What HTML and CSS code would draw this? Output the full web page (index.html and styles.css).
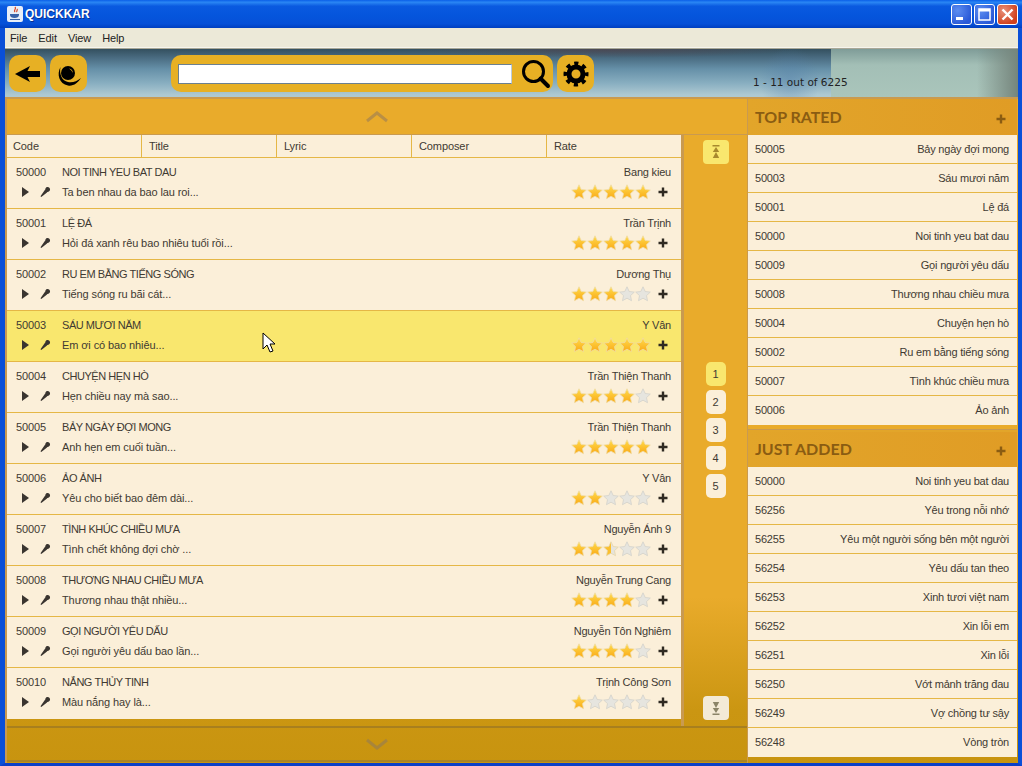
FILE: index.html
```html
<!DOCTYPE html>
<html lang="vi">
<head>
<meta charset="utf-8">
<title>QUICKKAR</title>
<link rel="stylesheet" href="styles.css">
</head>
<body>
<svg class="defs" width="0" height="0" aria-hidden="true">
  <defs>
    <linearGradient id="gold" x1="0" y1="0" x2="0" y2="1"><stop offset="0" stop-color="#ffdc4e"/><stop offset="1" stop-color="#f9a916"/></linearGradient>
    <linearGradient id="half" x1="0" y1="0" x2="1" y2="0"><stop offset=".5" stop-color="#fbbf2c"/><stop offset=".5" stop-color="#e6e4dc"/></linearGradient>
    <symbol id="on" viewBox="0 0 16 16"><path d="M8 .8l2.200 4.700 5.100.6-3.800 3.500 1 5.100L8 12.200l-4.500 2.500 1-5.100L.7 6.100l5.100-.6z" fill="url(#gold)" stroke="#f0dca6" stroke-width=".8"/></symbol>
    <symbol id="off" viewBox="0 0 16 16"><path d="M8 .8l2.200 4.700 5.100.6-3.800 3.500 1 5.100L8 12.200l-4.500 2.500 1-5.100L.7 6.100l5.100-.6z" fill="#e6e5df" stroke="#d3d2ca" stroke-width=".8"/></symbol>
    <symbol id="mid" viewBox="0 0 16 16"><path d="M8 .8l2.200 4.700 5.100.6-3.800 3.500 1 5.100L8 12.200l-4.500 2.500 1-5.100L.7 6.100l5.100-.6z" fill="url(#half)" stroke="#e6d6a8" stroke-width=".8"/></symbol>
    <symbol id="play" viewBox="0 0 10 12"><path d="M1 1l7 5-7 5z" fill="#3a3530"/></symbol>
    <symbol id="mic" viewBox="0 0 12 12"><path d="M6.600 2.200a2.400 2.400 0 1 1 3.300 3.300 2.400 2.400 0 0 1-3.300-3.300zM6 3.800l2.300 2.400-4.400 3.600-1.700 1.200-.7-.7 1.200-1.700z" fill="#3a3530"/></symbol>
    <symbol id="plus" viewBox="0 0 10 10"><path d="M3.800.5h2.400v3.300h3.300v2.400H6.200v3.300H3.800V6.200H.5V3.800h3.300z" fill="currentColor"/></symbol>
    <symbol id="jump" viewBox="0 0 8 14"><path d="M.5 0h7v1.400h-7zM4 2l3.200 5H.8zM4 7l3.200 6H.8z" fill="currentColor"/></symbol>
  </defs>
</svg>
<div class="window">
  <header class="titlebar">
    <svg class="app-icon" width="16" height="16" viewBox="0 0 16 16"><rect width="16" height="16" rx="2" fill="#e8eef8"/><path d="M8 1c2 2-2 3 0 5M10 3c1 1-1 2 0 3" stroke="#d8401c" stroke-width="1.200" fill="none"/><path d="M3 8h9v1c0 2-2 3-4.500 3S3 11 3 9z" fill="#3a62a8"/><path d="M3 13h10v1H3z" fill="#3a62a8"/></svg>
    <span class="app-title">QUICKKAR</span>
    <div class="win-btns">
      <span class="win-btn"><svg width="21" height="21" viewBox="0 0 21 21"><rect x="5" y="13" width="7" height="3" fill="#fff"/></svg></span>
      <span class="win-btn"><svg width="21" height="21" viewBox="0 0 21 21"><rect x="5" y="5" width="11" height="11" fill="none" stroke="#fff" stroke-width="1.500"/><rect x="5" y="5" width="11" height="2.500" fill="#fff"/></svg></span>
      <span class="win-btn win-close"><svg width="21" height="21" viewBox="0 0 21 21"><path d="M5.500 5.500l10 10M15.500 5.500l-10 10" stroke="#fff" stroke-width="2.400"/></svg></span>
    </div>
  </header>
  <div class="frame">
    <nav class="menubar"><span>File</span><span>Edit</span><span>View</span><span>Help</span></nav>
    <div class="toolbar">
      <button class="tool"><svg width="25" height="16" viewBox="0 0 25 16"><path d="M0 8L15 0l-2.500 5H25v6H12.500L15 16z" fill="#000"/></svg></button>
      <button class="tool"><svg width="28" height="26" viewBox="0 0 28 26"><path d="M5.500 6C1.500 13 4 23 13 24.500 18 25.500 23 22 26 17c-4 3.500-9 5-13 4C7 20 4 13 5.500 6z" fill="#000"/><circle cx="13" cy="12" r="7" fill="#000"/><path d="M14 7.500c2.500.2 4 2 3.700 4.500-.5-1.800-1.800-3.200-3.700-4.500z" fill="#e7b024"/></svg></button>
      <div class="search">
        <input class="search-input" type="text">
        <svg width="30" height="30" viewBox="0 0 30 30"><circle cx="12.500" cy="12.500" r="10" fill="none" stroke="#000" stroke-width="3"/><path d="M19.500 19.500l7.500 7.500" stroke="#000" stroke-width="4" stroke-linecap="round"/></svg>
      </div>
      <button class="tool"><svg width="26" height="26" viewBox="0 0 26 26"><circle cx="13" cy="13" r="7" fill="none" stroke="#000" stroke-width="5"/><circle cx="13" cy="13" r="10.500" fill="none" stroke="#000" stroke-width="4" stroke-dasharray="4.120 4.120" stroke-dashoffset="2.060"/></svg></button>
      <span class="count">1 - 11 out of 6225</span>
    </div>
    <main class="main">
      <section class="left">
        <div class="scroll-bar"><svg width="24" height="12" viewBox="0 0 24 12"><path d="M2 10l10-8 10 8" fill="none" stroke="#b98f45" stroke-width="3"/></svg></div>
        <div class="middle">
          <div class="list">
            <div class="list-head"><span>Code</span><span>Title</span><span>Lyric</span><span>Composer</span><span>Rate</span></div>

            <article class="song">
              <div class="line"><span class="code">50000</span><span class="title title-caps">NOI TINH YEU BAT DAU</span><span class="composer">Bang kieu</span></div>
              <div class="line"><span class="ctl"><svg class="i-play"><use href="#play"/></svg><svg class="i-mic"><use href="#mic"/></svg></span><span class="title">Ta ben nhau da bao lau roi...</span><span class="stars"><svg><use href="#on"/></svg><svg><use href="#on"/></svg><svg><use href="#on"/></svg><svg><use href="#on"/></svg><svg><use href="#on"/></svg></span><svg class="i-plus"><use href="#plus"/></svg></div>
            </article>
            <article class="song">
              <div class="line"><span class="code">50001</span><span class="title title-caps">LỆ ĐÁ</span><span class="composer">Trần Trịnh</span></div>
              <div class="line"><span class="ctl"><svg class="i-play"><use href="#play"/></svg><svg class="i-mic"><use href="#mic"/></svg></span><span class="title">Hỏi đá xanh rêu bao nhiêu tuổi rồi...</span><span class="stars"><svg><use href="#on"/></svg><svg><use href="#on"/></svg><svg><use href="#on"/></svg><svg><use href="#on"/></svg><svg><use href="#on"/></svg></span><svg class="i-plus"><use href="#plus"/></svg></div>
            </article>
            <article class="song">
              <div class="line"><span class="code">50002</span><span class="title title-caps">RU EM BẰNG TIẾNG SÓNG</span><span class="composer">Dương Thụ</span></div>
              <div class="line"><span class="ctl"><svg class="i-play"><use href="#play"/></svg><svg class="i-mic"><use href="#mic"/></svg></span><span class="title">Tiếng sóng ru bãi cát...</span><span class="stars"><svg><use href="#on"/></svg><svg><use href="#on"/></svg><svg><use href="#on"/></svg><svg><use href="#off"/></svg><svg><use href="#off"/></svg></span><svg class="i-plus"><use href="#plus"/></svg></div>
            </article>
            <article class="song song-active">
              <div class="line"><span class="code">50003</span><span class="title title-caps">SÁU MƯƠI NĂM</span><span class="composer">Y Vân</span></div>
              <div class="line"><span class="ctl"><svg class="i-play"><use href="#play"/></svg><svg class="i-mic"><use href="#mic"/></svg></span><span class="title">Em ơi có bao nhiêu...</span><span class="stars"><svg><use href="#on"/></svg><svg><use href="#on"/></svg><svg><use href="#on"/></svg><svg><use href="#on"/></svg><svg><use href="#on"/></svg></span><svg class="i-plus"><use href="#plus"/></svg></div>
            </article>
            <article class="song">
              <div class="line"><span class="code">50004</span><span class="title title-caps">CHUYỆN HẸN HÒ</span><span class="composer">Trần Thiện Thanh</span></div>
              <div class="line"><span class="ctl"><svg class="i-play"><use href="#play"/></svg><svg class="i-mic"><use href="#mic"/></svg></span><span class="title">Hẹn chiều nay mà sao...</span><span class="stars"><svg><use href="#on"/></svg><svg><use href="#on"/></svg><svg><use href="#on"/></svg><svg><use href="#on"/></svg><svg><use href="#off"/></svg></span><svg class="i-plus"><use href="#plus"/></svg></div>
            </article>
            <article class="song">
              <div class="line"><span class="code">50005</span><span class="title title-caps">BẢY NGÀY ĐỢI MONG</span><span class="composer">Trần Thiện Thanh</span></div>
              <div class="line"><span class="ctl"><svg class="i-play"><use href="#play"/></svg><svg class="i-mic"><use href="#mic"/></svg></span><span class="title">Anh hẹn em cuối tuần...</span><span class="stars"><svg><use href="#on"/></svg><svg><use href="#on"/></svg><svg><use href="#on"/></svg><svg><use href="#on"/></svg><svg><use href="#on"/></svg></span><svg class="i-plus"><use href="#plus"/></svg></div>
            </article>
            <article class="song">
              <div class="line"><span class="code">50006</span><span class="title title-caps">ẢO ẢNH</span><span class="composer">Y Vân</span></div>
              <div class="line"><span class="ctl"><svg class="i-play"><use href="#play"/></svg><svg class="i-mic"><use href="#mic"/></svg></span><span class="title">Yêu cho biết bao đêm dài...</span><span class="stars"><svg><use href="#on"/></svg><svg><use href="#on"/></svg><svg><use href="#off"/></svg><svg><use href="#off"/></svg><svg><use href="#off"/></svg></span><svg class="i-plus"><use href="#plus"/></svg></div>
            </article>
            <article class="song">
              <div class="line"><span class="code">50007</span><span class="title title-caps">TÌNH KHÚC CHIỀU MƯA</span><span class="composer">Nguyễn Ánh 9</span></div>
              <div class="line"><span class="ctl"><svg class="i-play"><use href="#play"/></svg><svg class="i-mic"><use href="#mic"/></svg></span><span class="title">Tình chết không đợi chờ ...</span><span class="stars"><svg><use href="#on"/></svg><svg><use href="#on"/></svg><svg><use href="#mid"/></svg><svg><use href="#off"/></svg><svg><use href="#off"/></svg></span><svg class="i-plus"><use href="#plus"/></svg></div>
            </article>
            <article class="song">
              <div class="line"><span class="code">50008</span><span class="title title-caps">THƯƠNG NHAU CHIỀU MƯA</span><span class="composer">Nguyễn Trung Cang</span></div>
              <div class="line"><span class="ctl"><svg class="i-play"><use href="#play"/></svg><svg class="i-mic"><use href="#mic"/></svg></span><span class="title">Thương nhau thật nhiều...</span><span class="stars"><svg><use href="#on"/></svg><svg><use href="#on"/></svg><svg><use href="#on"/></svg><svg><use href="#on"/></svg><svg><use href="#off"/></svg></span><svg class="i-plus"><use href="#plus"/></svg></div>
            </article>
            <article class="song">
              <div class="line"><span class="code">50009</span><span class="title title-caps">GỌI NGƯỜI YÊU DẤU</span><span class="composer">Nguyễn Tôn Nghiêm</span></div>
              <div class="line"><span class="ctl"><svg class="i-play"><use href="#play"/></svg><svg class="i-mic"><use href="#mic"/></svg></span><span class="title">Gọi người yêu dấu bao lần...</span><span class="stars"><svg><use href="#on"/></svg><svg><use href="#on"/></svg><svg><use href="#on"/></svg><svg><use href="#on"/></svg><svg><use href="#off"/></svg></span><svg class="i-plus"><use href="#plus"/></svg></div>
            </article>
            <article class="song song-last">
              <div class="line"><span class="code">50010</span><span class="title title-caps">NẮNG THỦY TINH</span><span class="composer">Trịnh Công Sơn</span></div>
              <div class="line"><span class="ctl"><svg class="i-play"><use href="#play"/></svg><svg class="i-mic"><use href="#mic"/></svg></span><span class="title">Màu nắng hay là...</span><span class="stars"><svg><use href="#on"/></svg><svg><use href="#off"/></svg><svg><use href="#off"/></svg><svg><use href="#off"/></svg><svg><use href="#off"/></svg></span><svg class="i-plus"><use href="#plus"/></svg></div>
            </article>
          </div>
          <aside class="pager">
            <span class="jump jump-on"><svg width="8" height="14"><use href="#jump"/></svg></span>
            <div class="pages">
              <span class="page page-on">1</span><span class="page">2</span><span class="page">3</span><span class="page">4</span><span class="page">5</span>
            </div>
            <span class="jump jump-end"><svg class="flip" width="8" height="14"><use href="#jump"/></svg></span>
          </aside>
        </div>
        <div class="scroll-bar scroll-bottom"><svg width="24" height="12" viewBox="0 0 24 12"><path d="M2 2l10 8 10-8" fill="none" stroke="#a8853a" stroke-width="3"/></svg></div>
      </section>
      <section class="right">
        <h2 class="side-head">TOP RATED<svg class="i-plus"><use href="#plus"/></svg></h2>
        <ul class="side-list">
          <li><span>50005</span><span>Bảy ngày đợi mong</span></li>
          <li><span>50003</span><span>Sáu mươi năm</span></li>
          <li><span>50001</span><span>Lệ đá</span></li>
          <li><span>50000</span><span>Noi tinh yeu bat dau</span></li>
          <li><span>50009</span><span>Gọi người yêu dấu</span></li>
          <li><span>50008</span><span>Thương nhau chiều mưa</span></li>
          <li><span>50004</span><span>Chuyện hẹn hò</span></li>
          <li><span>50002</span><span>Ru em bằng tiếng sóng</span></li>
          <li><span>50007</span><span>Tình khúc chiều mưa</span></li>
          <li><span>50006</span><span>Ảo ảnh</span></li>
        </ul>
        <div class="side-gap"></div>
        <h2 class="side-head side-head-low">JUST ADDED<svg class="i-plus"><use href="#plus"/></svg></h2>
        <ul class="side-list">
          <li><span>50000</span><span>Noi tinh yeu bat dau</span></li>
          <li><span>56256</span><span>Yêu trong nỗi nhớ</span></li>
          <li><span>56255</span><span>Yêu một người sống bên một người</span></li>
          <li><span>56254</span><span>Yêu dấu tan theo</span></li>
          <li><span>56253</span><span>Xinh tươi việt nam</span></li>
          <li><span>56252</span><span>Xin lỗi em</span></li>
          <li><span>56251</span><span>Xin lỗi</span></li>
          <li><span>56250</span><span>Vớt mảnh trăng đau</span></li>
          <li><span>56249</span><span>Vợ chồng tư sậy</span></li>
          <li><span>56248</span><span>Vòng tròn</span></li>
        </ul>
      </section>
    </main>
  </div>
  <svg class="cursor" width="14" height="22" viewBox="0 0 14 22"><path d="M1 1v16l4-4 3 7 3-1-3-7h5z" fill="#fff" stroke="#000" stroke-width="1"/></svg>
</div>
</body>
</html>
```
FILE: styles.css
```css
* { box-sizing: border-box; }
html, body { margin: 0; padding: 0; }
body { width: 1022px; height: 766px; overflow: hidden; font: 11px/14px "Liberation Sans", Arial, sans-serif; letter-spacing: -.1px; color: #3f3a32; background: #0a3fd0; }
.defs { position: absolute; }
.window { position: relative; width: 1022px; height: 766px; display: flex; flex-direction: column; }

.titlebar { height: 28px; flex: none; display: flex; align-items: center; padding: 0 4px 0 7px; background: linear-gradient(#0a5fe8 0, #2a86f4 8%, #0a5ae0 22%, #0555dc 55%, #0650d8 85%, #003fc0 100%); }
.app-icon { margin-right: 2px; }
.app-title { font: bold 12px "Liberation Sans", sans-serif; color: #fff; text-shadow: 1px 1px 0 #0a2f90; letter-spacing: 0; }
.win-btns { margin-left: auto; display: flex; gap: 2px; }
.win-btn { width: 21px; height: 21px; border: 1px solid #fff; border-radius: 3px; background: radial-gradient(circle at 30% 30%, #5d8df0, #2a5ad8 75%); overflow: hidden; display: block; }
.win-btn svg { display: block; margin: -1px; }
.win-close { background: radial-gradient(circle at 30% 30%, #e8907a, #d0401c 75%); }

.frame { flex: 1; min-height: 0; display: flex; flex-direction: column; border-left: 5px solid #0a4fd8; border-right: 4px solid #0a4fd8; border-bottom: 3px solid #0a3fc8; }
.menubar { height: 21px; flex: none; display: flex; align-items: center; padding-left: 5px; gap: 11px; background: #ece9d8; border-bottom: 1px solid #a9a897; box-shadow: inset 0 -1px 0 #f6f5ee; color: #222; }

.toolbar { height: 48px; flex: none; display: flex; align-items: flex-start; padding: 6px 0 0 4px; gap: 4px; position: relative;
  background:
    radial-gradient(ellipse 30px 34px at 785px 32px, rgba(80,125,170,.4), transparent),
    radial-gradient(ellipse 190px 9px at 600px 0, rgba(85,70,80,.7), transparent),
    linear-gradient(#34505f 0, #48697e 8px, #6690a8 20px, #88aec0 34px, #aec9d2 46px) 0 0 / 826px 100% no-repeat,
    linear-gradient(90deg, rgba(122,138,128,0) 0, rgba(122,138,128,0) 78%, #75857c 100%) 826px 0 / 187px 100% no-repeat,
    linear-gradient(#7f9c98 0, #a3bfb6 16px, #aac5bb 100%) 826px 0 / 187px 100% no-repeat; }
.tool { width: 37px; height: 37px; padding: 0; border: 0; border-radius: 10px; background: #e7b024; display: flex; align-items: center; justify-content: center; }
.search { width: 382px; height: 37px; margin-left: 80px; border-radius: 10px; background: #e7b024; display: flex; align-items: center; padding-left: 7px; gap: 9px; }
.search-input { width: 334px; height: 20px; border: 1px solid #6b8090; border-right-color: #bcd; background: #fff; padding: 0; }
.count { margin: 20px 0 0 155px; color: #222; font-family: "DejaVu Sans", sans-serif; letter-spacing: 0; font-size: 10.500px; }

.main { flex: 1; min-height: 0; display: flex; background: linear-gradient(#e9ab2b 0, #e9ab2b 75%, #cb9612 92%, #c8940f 100%); border-top: 2px solid #c99a50; }
.left { width: 743px; flex: none; display: flex; flex-direction: column; border-left: 2px solid #c99a50; border-right: 1px solid #c99a50; }
.scroll-bar { height: 36px; flex: none; display: flex; align-items: center; justify-content: center; border-bottom: 1px solid #c99a50; }
.scroll-bottom { height: 36px; border-top: 2px solid #a87f1e; border-bottom: 2px solid #a98426; }
.middle { height: 591px; flex: none; display: flex; align-items: flex-start; }
.list { width: 674px; flex: none; }
.list-head { height: 23px; display: grid; grid-template-columns: 135px 135px 135px 135px 134px; background: #fbefd9; border-bottom: 1px solid #e5b746; }
.list-head span { padding: 4px 0 0 7px; border-right: 1px solid #e5b746; }
.list-head span:first-child { padding-left: 6px; }
.list-head span:last-child { border-right: 0; }

.song { height: 51px; background: #fbefd9; border-bottom: 1px solid #e5b746; padding: 7px 10px 0 9px; display: flex; flex-direction: column; gap: 6px; }
.song-last { border-bottom: 0; }
.song-active { background: #f9e76e; }
.line { display: flex; align-items: center; height: 14px; }
.code { width: 46px; flex: none; }
.ctl { width: 46px; flex: none; display: flex; align-items: center; padding-left: 5px; gap: 8px; }
.title { flex: 1; min-width: 0; }
.title-caps { letter-spacing: -.45px; }
.composer { margin-left: auto; letter-spacing: -.2px; }
.i-play { width: 10px; height: 12px; flex: none; }
.i-mic { width: 12px; height: 12px; flex: none; }
.stars { display: flex; flex: none; margin-right: 7px; }
.stars svg { width: 16px; height: 16px; display: block; }
.i-plus { width: 10px; height: 10px; flex: none; color: #2f2a22; margin-right: 3px; }

.pager { width: 66px; height: 591px; flex: none; border-left: 3px solid #c99a50; display: flex; flex-direction: column; align-items: center; padding: 5px 0 6px; }
.jump { width: 26px; height: 24px; border-radius: 4px; display: flex; align-items: center; justify-content: center; background: #f9e76e; color: #a8892e; }
.jump-end { background: #f3ead6; color: #8a8468; }
.flip { transform: scaleY(-1); }
.pages { margin-top: 198px; margin-bottom: auto; display: flex; flex-direction: column; gap: 4px; }
.page { width: 20px; height: 24px; border-radius: 5px; background: #fbefd9; display: flex; align-items: center; justify-content: center; }
.page-on { background: #f9e76e; }

.right { flex: 1; min-width: 0; display: flex; flex-direction: column; padding-right: 1px; }
.side-head { height: 36px; flex: none; margin: 0; padding: 0 8px 2px 7px; display: flex; align-items: center; justify-content: space-between; font: bold 16px Lato, sans-serif; letter-spacing: 0; color: #8a5c12; background: linear-gradient(90deg, #e2a52a, #e09c25); }
.side-head-low { height: 35px; padding-bottom: 3px; }
.side-head .i-plus { color: #8a5c12; margin-top: 5px; }
.side-list { list-style: none; margin: 0; padding: 0; letter-spacing: -.2px; }
.side-list li { height: 29px; display: flex; justify-content: space-between; align-items: center; padding: 0 8px 1px 7px; background: #fbefd9; border-bottom: 1px solid #e5b746; }
.side-list li:last-child { border-bottom: 0; }
.side-gap { height: 7px; flex: none; background: linear-gradient(#e9ab2b 0 4px, #c99a50 4px 5px, #e2a52a 5px); }
.cursor { position: absolute; left: 262px; top: 332px; }
```
